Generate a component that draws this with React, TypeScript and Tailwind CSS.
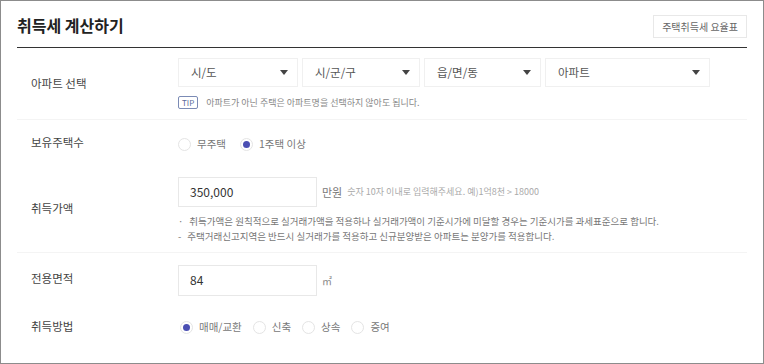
import React from "react";

const font = { fontFamily: '"Noto Sans CJK KR", "Noto Sans", sans-serif' };

const Select = ({ label, width }: { label: string; width: string }) => (
  <div className={`flex h-[29px] ${width} items-center justify-between border border-[#f0f0f0] pl-[12px] pr-[9px] text-[11.5px] text-[#555]`}>
    <span>{label}</span>
    <svg width="8" height="5" viewBox="0 0 8 5">
      <path d="M0 0h8L4 5z" fill="#444" />
    </svg>
  </div>
);

const Radio = ({ label, checked }: { label: string; checked?: boolean }) => (
  <label className="flex items-center gap-[6px] text-[10.5px] text-[#777]">
    <span className="flex h-[13px] w-[13px] items-center justify-center rounded-full border border-[#e4e4e4] bg-white">
      {checked && <span className="h-[7px] w-[7px] rounded-full bg-[#4b4fb3]" />}
    </span>
    {label}
  </label>
);

const Row = ({ label, children, className }: { label: string; children: React.ReactNode; className: string }) => (
  <div className={`flex ${className}`}>
    <div className="flex w-[161px] items-center pl-[14px] text-[11.5px] text-[#444]">{label}</div>
    <div className="flex flex-1 flex-col justify-center">{children}</div>
  </div>
);

export default function App() {
  return (
    <div style={font} className="h-[364px] w-[764px] border border-[#8c8c8c] bg-white">
      <div className="px-[16px]">
        <div className="flex h-[47px] items-center justify-between border-b border-[#333]">
          <h1 className="pt-[2px] text-[16px] font-bold text-[#222]">취득세 계산하기</h1>
          <button className="mt-[4px] h-[23px] border border-[#e8e8e8] px-[8px] text-[10px] text-[#666]">주택취득세 요율표</button>
        </div>

        <Row label="아파트 선택" className="h-[72px] border-b border-[#f4f4f4]">
          <div className="flex gap-[4px]">
            <Select label="시/도" width="w-[120px]" />
            <Select label="시/군/구" width="w-[118px]" />
            <Select label="읍/면/동" width="w-[117px]" />
            <Select label="아파트" width="w-[165px]" />
          </div>
          <div className="mt-[9px] flex items-center gap-[8px] text-[9px] text-[#888]">
            <span className="flex h-[13px] items-center rounded-[2px] border border-[#7b8bb5] px-[3px] text-[8px] leading-none text-[#5a6a9a]">TIP</span>
            아파트가 아닌 주택은 아파트명을 선택하지 않아도 됩니다.
          </div>
        </Row>

        <Row label="보유주택수" className="h-[46px]">
          <div className="flex gap-[14px] pt-[2px]">
            <Radio label="무주택" />
            <Radio label="1주택 이상" checked />
          </div>
        </Row>

        <Row label="취득가액" className="h-[87px] border-b border-[#f4f4f4]">
          <div className="flex items-center gap-[5px] pt-[2px]">
            <div className="flex h-[30px] w-[139px] items-center border border-[#e8e8e8] pl-[11px] text-[12px] text-[#333]">350,000</div>
            <span className="text-[11px] text-[#777]">만원</span>
            <span className="text-[9px] text-[#aaa]">숫자 10자 이내로 입력해주세요. 예)1억8천 &gt; 18000</span>
          </div>
          <ul className="mt-[8px] flex flex-col gap-[2px] text-[9.5px] leading-[13px] text-[#777]">
            <li className="flex gap-[6px]"><span>·</span>취득가액은 원칙적으로 실거래가액을 적용하나 실거래가액이 기준시가에 미달할 경우는 기준시가를 과세표준으로 합니다.</li>
            <li className="flex gap-[6px]"><span>-</span>주택거래신고지역은 반드시 실거래가를 적용하고 신규분양받은 아파트는 분양가를 적용합니다.</li>
          </ul>
        </Row>

        <Row label="전용면적" className="h-[51px]">
          <div className="flex items-center gap-[5px] pt-[3px]">
            <div className="flex h-[31px] w-[139px] items-center border border-[#e8e8e8] pl-[11px] text-[12px] text-[#333]">84</div>
            <span className="text-[10px] text-[#888]">㎡</span>
          </div>
        </Row>

        <Row label="취득방법" className="h-[46px]">
          <div className="flex gap-[11px] pl-[2px]">
            <Radio label="매매/교환" checked />
            <Radio label="신축" />
            <Radio label="상속" />
            <Radio label="증여" />
          </div>
        </Row>
      </div>
    </div>
  );
}
